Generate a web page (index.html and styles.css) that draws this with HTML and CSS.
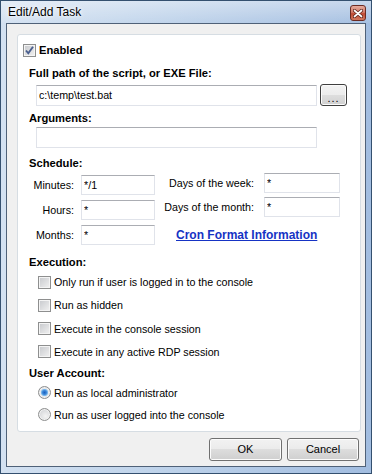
FILE: index.html
```html
<!DOCTYPE html>
<html lang="en">
<head>
    <meta charset="UTF-8">
    <title>Edit/Add Task</title>
    <link rel="stylesheet" href="styles.css">
</head>
<body>
    <div class="window">
        <div class="titlebar">
            <span class="title">Edit/Add Task</span>
            <span class="close">
                <svg width="10" height="9" viewBox="0 0 10 9">
                    <path d="M1.5 1.5 L8.5 7.5 M8.5 1.5 L1.5 7.5" stroke="#5a2018" stroke-width="3.2" stroke-linecap="round"/>
                    <path d="M1.5 1.5 L8.5 7.5 M8.5 1.5 L1.5 7.5" stroke="#fff" stroke-width="1.7" stroke-linecap="round"/>
                </svg>
            </span>
        </div>

        <div class="client">
            <div class="panel">
                <div class="check-row enabled">
                    <span class="box">
                        <svg width="11" height="11" viewBox="0 0 11 11">
                            <path d="M2 5.5 L4.3 8.3 L9 1.8" stroke="#4a5f8f" stroke-width="1.9" fill="none"/>
                        </svg>
                    </span>
                    <b>Enabled</b>
                </div>

                <div class="heading gap7">Full path of the script, or EXE File:</div>
                <div class="path-row">
                    <input type="text" class="field wide" value="c:\temp\test.bat">
                    <button class="browse">...</button>
                </div>

                <div class="heading gap4">Arguments:</div>
                <input type="text" class="field wide args" value="">

                <div class="heading gap7">Schedule:</div>
                <div class="schedule">
                    <div class="sched-left">
                        <span class="lbl">Minutes:</span>
                        <input type="text" class="field small" value="*/1">
                        <span class="lbl">Hours:</span>
                        <input type="text" class="field small" value="*">
                        <span class="lbl">Months:</span>
                        <input type="text" class="field small" value="*">
                    </div>
                    <div class="sched-right">
                        <span class="lbl">Days of the week:</span>
                        <input type="text" class="field small right" value="*">
                        <span class="lbl">Days of the month:</span>
                        <input type="text" class="field small right" value="*">
                        <a class="cron-link" href="#">Cron Format Information</a>
                    </div>
                </div>

                <div class="heading gap5">Execution:</div>
                <div class="options checks">
                    <div class="check-row"><span class="box"></span>Only run if user is logged in to the console</div>
                    <div class="check-row"><span class="box"></span>Run as hidden</div>
                    <div class="check-row"><span class="box"></span>Execute in the console session</div>
                    <div class="check-row"><span class="box"></span>Execute in any active RDP session</div>
                </div>

                <div class="heading gap5">User Account:</div>
                <div class="options radios">
                    <div class="check-row"><span class="radio on"></span>Run as local administrator</div>
                    <div class="check-row"><span class="radio"></span>Run as user logged into the console</div>
                </div>
            </div>

            <div class="buttons">
                <button class="btn ok">OK</button>
                <button class="btn cancel">Cancel</button>
            </div>
        </div>
    </div>
</body>
</html>
```

FILE: styles.css
```css
* {
    box-sizing: border-box;
}
body {
    margin: 0;
    font-family: "Liberation Sans", Arial, sans-serif;
    font-size: 10.7px;
    color: #000;
    background: #fff;
}

/* window frame */
.window {
    width: 372px;
    height: 474px;
    border: 1px solid #34506f;
    background: linear-gradient(to right, #d3e1f1, #c0d4eb 40%, #a2bde0);
    display: flex;
    flex-direction: column;
}
.titlebar {
    position: relative;
    height: 22px;
    flex: none;
    padding-left: 7px;
    line-height: 23px;
    font-size: 12px;
    background: linear-gradient(to bottom, rgba(255, 255, 255, 0.4), rgba(255, 255, 255, 0.05));
}
.title {
    text-shadow: 0 0 6px #fff, 0 0 3px #fff;
}
.close {
    position: absolute;
    top: 4px;
    right: 5px;
    width: 16px;
    height: 16px;
    border: 1px solid #6b2a22;
    border-radius: 3px;
    background: linear-gradient(#e6aa9d, #d27b69 45%, #c04a33 55%, #d27a60);
    display: flex;
    align-items: center;
    justify-content: center;
}
.client {
    flex: 1;
    margin: 0 5px 6px 5px;
    border: 1px solid #4f6178;
    background: #f0f0f0;
    padding: 10px 4px 0 10px;
    display: flex;
    flex-direction: column;
}

/* white group panel */
.panel {
    border: 1px solid #d6dde3;
    border-radius: 3px;
    background: #fff;
    padding: 7px 0 8px 11px;
}
.heading {
    height: 16px;
    line-height: 16px;
    font-size: 11.2px;
    font-weight: bold;
}
.enabled b {
    font-size: 11.2px;
}
.gap4 { margin-top: 4px; }
.gap5 { margin-top: 5px; }
.gap7 { margin-top: 7px; }

.field {
    height: 21px;
    border: 1px solid #e0e3ea;
    border-top-color: #abadb3;
    padding: 0 2px;
    font-family: inherit;
    font-size: 10.7px;
    color: #000;
    background: #fff;
    outline: none;
}
.wide {
    width: 281px;
    margin-left: 7px;
}
.args {
    display: block;
    margin-top: 1px;
}
.path-row {
    display: flex;
    align-items: center;
    gap: 3px;
    height: 22px;
    margin-top: 3px;
}
.browse {
    width: 27px;
    height: 22px;
    padding: 0 0 2px;
    border: 1px solid #3f3f3f;
    border-radius: 3px;
    background: linear-gradient(#f3f3f3, #ececec 50%, #dedede 50%, #d0d0d0);
    box-shadow: inset 0 0 0 1px #fbfbfb;
    font-family: inherit;
    font-size: 11px;
    line-height: 26px;
    letter-spacing: 1px;
}

/* schedule block */
.schedule {
    display: flex;
    align-items: flex-start;
}
.sched-left {
    display: grid;
    grid-template-columns: 45px 74px;
    grid-template-rows: 20px 20px 20px;
    column-gap: 7px;
    row-gap: 5px;
    align-items: center;
    margin-top: 4px;
}
.sched-right {
    display: grid;
    grid-template-columns: 96px 76px;
    grid-template-rows: 20px 20px 28px;
    column-gap: 10px;
    row-gap: 4px;
    align-items: center;
    margin-top: 2px;
    margin-left: 3px;
}
.lbl {
    text-align: right;
    white-space: nowrap;
}
.field.small {
    height: 20px;
    width: 74px;
}
.field.small.right {
    width: 76px;
}
.cron-link {
    grid-column: 1 / 3;
    padding-left: 18px;
    font-size: 12px;
    font-weight: bold;
    color: #1633c4;
}

/* checkboxes and radios */
.check-row {
    display: flex;
    align-items: center;
    gap: 3px;
    height: 16px;
}
.enabled {
    margin-left: -6px;
}
.options {
    display: flex;
    flex-direction: column;
    margin-left: 9px;
    margin-top: 4px;
}
.checks {
    gap: 7.33px;
}
.radios {
    gap: 6px;
}
.box {
    width: 13px;
    height: 13px;
    flex: none;
    border: 1px solid #8e8f8f;
    background: linear-gradient(135deg, #c6c8cc, #f2f2f2);
    box-shadow: inset 0 0 0 1px #f4f4f4;
    display: flex;
    align-items: center;
    justify-content: center;
}
.radio {
    width: 13px;
    height: 13px;
    flex: none;
    border: 1px solid #8e8f8f;
    border-radius: 50%;
    background: radial-gradient(circle at 60% 65%, #f4f4f4, #c9cbcf);
    box-shadow: inset 0 0 0 1px #f2f2f2;
}
.radio.on {
    background: radial-gradient(circle at 50% 50%, #1c5fc0 0, #3d88d8 2px, #8cc2ef 3.4px, #e7e9ec 4px, #c9cbcf 6px);
}

/* bottom buttons */
.buttons {
    display: flex;
    justify-content: flex-end;
    gap: 5px;
    margin-top: 6px;
    margin-right: 2px;
}
.btn {
    height: 23px;
    border: 1px solid #707070;
    border-radius: 3px;
    background: linear-gradient(#f2f2f2, #ebebeb 50%, #dddddd 50%, #cfcfcf);
    box-shadow: inset 0 0 0 1px #fcfcfc;
    font-family: inherit;
    font-size: 11px;
    color: #000;
    padding: 0;
}
.ok {
    width: 73px;
}
.cancel {
    width: 72px;
}
```
